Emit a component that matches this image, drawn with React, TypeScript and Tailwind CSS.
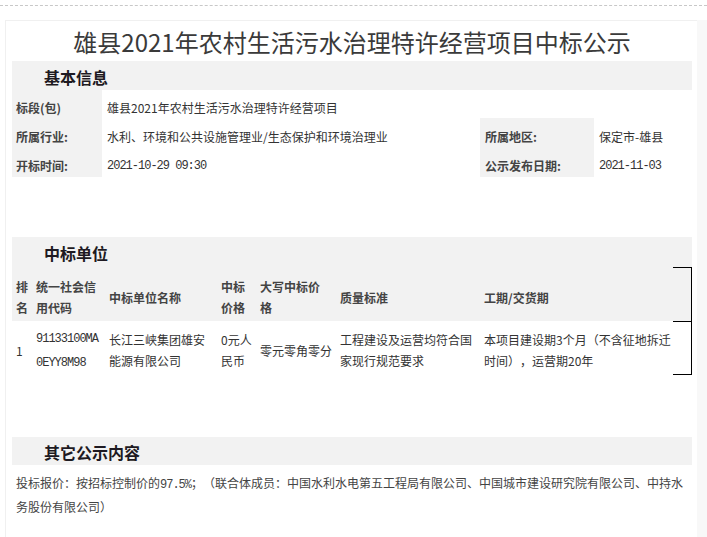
const mono = "font-['Liberation_Mono',monospace] text-[12px] tracking-[-1px]";

const SectionTitle = ({ title, h }: { title: string; h: string }) => (
  <div className={`flex items-center bg-[#f2f2f2] pl-[32px] pt-[2px] ${h}`}>
    <span className="text-[16px] font-bold text-[#1e1a22] leading-none">{title}</span>
  </div>
);

const InfoRow = ({
  h,
  label,
  children,
  label2,
  value2,
}: {
  h: string;
  label: string;
  children: React.ReactNode;
  label2?: string;
  value2?: React.ReactNode;
}) => (
  <div className={`flex ${h}`}>
    <div className="flex w-[90px] items-center bg-[#f2f2f2] pl-[4px] pt-[8px] text-[12px] font-bold text-[#444]">
      {label}
    </div>
    {label2 ? (
      <>
        <div className="flex w-[378px] items-center pl-[5px] pt-[8px] text-[12px] text-[#333]">{children}</div>
        <div className="flex w-[114px] items-center bg-[#f2f2f2] pl-[5px] pt-[8px] text-[12px] font-bold text-[#444]">
          {label2}
        </div>
        <div className="flex flex-1 items-center pl-[5px] pt-[8px] text-[12px] text-[#333]">{value2}</div>
      </>
    ) : (
      <div className="flex flex-1 items-center pl-[5px] pt-[8px] text-[12px] text-[#333]">{children}</div>
    )}
  </div>
);

const cols = ["w-[20px]", "w-[73px]", "w-[112px]", "w-[39px]", "w-[80px]", "w-[144px]", "w-[193px]"];

const Cell = ({ w, children }: { w: string; children: React.ReactNode }) => (
  <div className={`flex items-center whitespace-nowrap pl-[4px] leading-[21px] ${w}`}>
    <div>{children}</div>
  </div>
);

export default function App() {
  const head = [
    <>排<br />名</>,
    <>统一社会信<br />用代码</>,
    <>中标单位名称</>,
    <>中标<br />价格</>,
    <>大写中标价<br />格</>,
    <>质量标准</>,
    <>工期/交货期</>,
  ];
  const row = [
    <>1</>,
    <span className={mono}>91133100MA<br />0EYY8M98</span>,
    <>长江三峡集团雄安<br />能源有限公司</>,
    <>0元人<br />民币</>,
    <>零元零角零分</>,
    <>工程建设及运营均符合国<br />家现行规范要求</>,
    <>本项目建设期3个月（不含征地拆迁<br />时间），运营期20年</>,
  ];

  return (
    <div className="flex h-[537px] w-[707px] flex-col overflow-hidden bg-white font-['Noto_Sans_CJK_SC',sans-serif] [text-spacing-trim:space-all]">
      <div className="h-[6px] shrink-0 border-b border-dashed border-[#c8c8c8]" />
      <div className="flex flex-1">
        <div className="ml-[5px] mt-[14px] flex w-[692px] flex-col border-l border-t border-[#f0f0f0] pl-[6px] pr-[5px]">
          <div className="flex h-[40px] items-center justify-center pt-[2px] text-[24px] leading-none text-[#3a3a3a]">
            雄县2021年农村生活污水治理特许经营项目中标公示
          </div>

          <SectionTitle title="基本信息" h="h-[29px]" />
          <InfoRow h="h-[28px]" label="标段(包)">
            雄县2021年农村生活污水治理特许经营项目
          </InfoRow>
          <InfoRow h="h-[29px]" label="所属行业:" label2="所属地区:" value2="保定市-雄县">
            水利、环境和公共设施管理业/生态保护和环境治理业
          </InfoRow>
          <InfoRow
            h="h-[30px]"
            label="开标时间:"
            label2="公示发布日期:"
            value2={<span className={mono}>2021-11-03</span>}
          >
            <span className={mono}>2021-10-29 09:30</span>
          </InfoRow>

          <div className="h-[60px] shrink-0" />
          <SectionTitle title="中标单位" h="h-[30px]" />
          <div className="flex h-[54px] bg-[#f2f2f2] pt-[6px] text-[12px] font-bold text-[#444]">
            {head.map((c, i) => (
              <Cell key={i} w={cols[i]}>
                {c}
              </Cell>
            ))}
            <div className="-mt-[6px] w-[19px] border-r border-t border-black" />
          </div>
          <div className="flex h-[54px] pt-[4px] text-[12px] text-[#333]">
            {row.map((c, i) => (
              <Cell key={i} w={cols[i]}>
                {c}
              </Cell>
            ))}
            <div className="-mt-[4px] w-[19px] border-y border-r border-black" />
          </div>

          <div className="h-[62px] shrink-0" />
          <SectionTitle title="其它公示内容" h="h-[28px]" />
          <p className="pl-[4px] pt-[7px] text-[12px] leading-[22px] text-[#444]">
            投标报价：按招标控制价的<span className={mono}>97.5%</span>；（联合体成员：中国水利水电第五工程局有限公司、中国城市建设研究院有限公司、中持水<br />务股份有限公司）
          </p>
        </div>
        <div className="mt-[14px] flex-1 bg-[#f8f8f8]" />
      </div>
    </div>
  );
}
